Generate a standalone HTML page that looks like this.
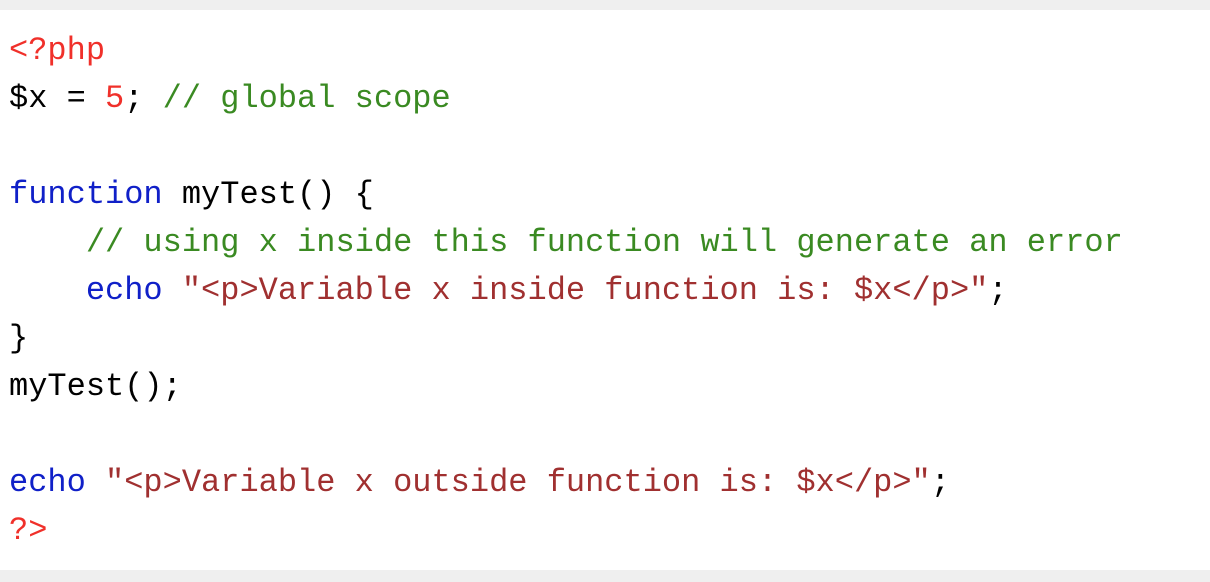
<!DOCTYPE html>
<html><head><meta charset="utf-8"><style>
html,body{margin:0;padding:0;background:#fff;width:1210px;height:582px;overflow:hidden}
.top{position:absolute;left:0;top:0;width:1210px;height:10px;background:#efefef}
.bot{position:absolute;left:0;top:570px;width:1210px;height:12px;background:#efefef}
pre{position:absolute;left:9px;top:27px;margin:0;font-family:"Liberation Mono","Courier New",monospace;font-size:32px;line-height:48px;color:#000}
.r{color:#f0302a}.g{color:#3a8a22}.b{color:#1020c8}.s{color:#a03030}
</style></head><body>
<div class="top"></div><div class="bot"></div>
<pre><span class="r">&lt;?php</span>
$x = <span class="r">5</span>; <span class="g">// global scope</span>

<span class="b">function</span> myTest() {
    <span class="g">// using x inside this function will generate an error</span>
    <span class="b">echo</span> <span class="s">"&lt;p&gt;Variable x inside function is: $x&lt;/p&gt;"</span>;
}
myTest();

<span class="b">echo</span> <span class="s">"&lt;p&gt;Variable x outside function is: $x&lt;/p&gt;"</span>;
<span class="r">?&gt;</span></pre>
</body></html>
